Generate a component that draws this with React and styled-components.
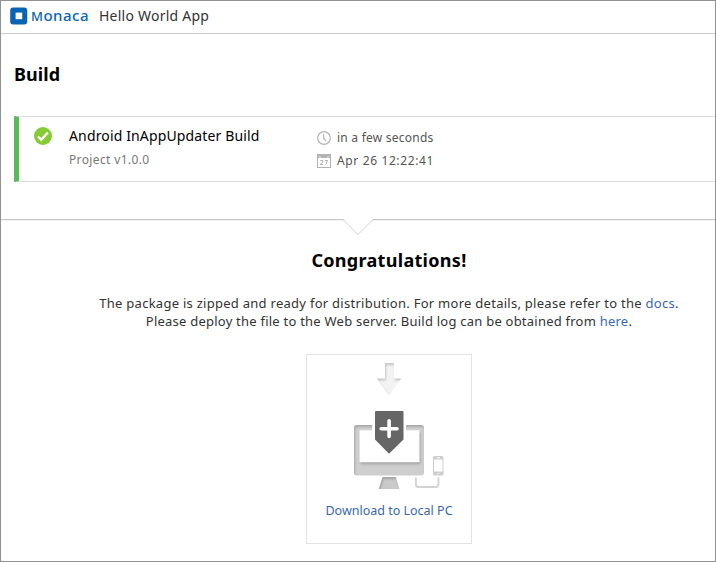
import React from 'react';
import styled, { createGlobalStyle } from 'styled-components';

const GlobalStyle = createGlobalStyle`
  *, *::before, *::after { box-sizing: border-box; }
  body { margin: 0; background: #fff; font-family: "Noto Sans", "Open Sans", sans-serif; color: #333; }
`;

const Page = styled.div`
  width: 716px;
  height: 562px;
  border: 1px solid #929292;
  overflow: hidden;
  display: flex;
  flex-direction: column;
`;

const Header = styled.header`
  height: 33px;
  flex: none;
  display: flex;
  align-items: center;
  padding: 0 0 3px 9px;
  border-bottom: 1px solid #ccc;
`;

const Brand = styled.div`
  display: flex;
  align-items: center;
  width: 89px;
  gap: 3px;
  color: #0864b4;
`;

const Wordmark = styled.span`
  display: block;
  font-size: 15px;
  line-height: 20px;
  font-weight: 500;
  letter-spacing: 0.5px;
  &::first-letter { font-size: 13px; }
`;

const AppName = styled.span`
  font-size: 14px;
  line-height: 20px;
  letter-spacing: 0.23px;
`;

const BuildSection = styled.section`
  height: 186px;
  flex: none;
  padding: 27px 0 0 13px;
  border-bottom: 1px solid #c8c8c8;
`;

const SectionTitle = styled.h1`
  margin: 0;
  color: #000;
  font-size: 18px;
  line-height: 26px;
  font-weight: 700;
  letter-spacing: 0.1px;
`;

const BuildCard = styled.div`
  display: flex;
  height: 66px;
  margin-top: 29px;
  border: solid #dcdcdc;
  border-width: 1px 0;
  border-left: 5px solid #5cb85c;
  padding: 9px 0 0 15px;
`;

const StatusIcon = styled.svg`
  flex: none;
  width: 18px;
  height: 18px;
  margin: 1px 17px 0 0;
`;

const BuildInfo = styled.div`
  width: 248px;
`;

const BuildName = styled.div`
  color: #000;
  font-size: 14px;
  line-height: 20px;
  letter-spacing: 0.14px;
`;

const BuildVersion = styled.div`
  margin-top: 5px;
  color: #777;
  font-size: 12px;
  line-height: 18px;
  letter-spacing: 0.36px;
`;

const MetaList = styled.div`
  display: grid;
  grid-auto-rows: 18px;
  row-gap: 5px;
  padding-top: 3px;
`;

const MetaItem = styled.div`
  display: flex;
  align-items: center;
  gap: 6px;
  color: #555;
  font-size: 12px;
  line-height: 18px;
  letter-spacing: ${(p) => p.$tracking};
  & > svg { margin-top: -1px; }
`;

const Result = styled.main`
  flex: 1;
  position: relative;
  padding: 27px 0 0 62px;
  display: flex;
  flex-direction: column;
  align-items: center;
  box-shadow: inset 0 2px 2px -1px #eee;
`;

const Notch = styled.svg`
  position: absolute;
  left: 341px;
  top: -1px;
  width: 32px;
  height: 17px;
`;

const Congrats = styled.h2`
  margin: 0;
  color: #000;
  font-size: 18px;
  line-height: 26px;
  font-weight: 700;
  letter-spacing: 0.3px;
`;

const Message = styled.p`
  margin: 21px 0 0;
  text-align: center;
  white-space: nowrap;
  font-size: 13px;
  line-height: 18px;
  letter-spacing: ${(p) => p.$tracking};
  & + & { margin-top: 0; }
`;

const Link = styled.a`
  color: #3a68b0;
  text-decoration: none;
`;

const DownloadBox = styled.a`
  display: flex;
  flex-direction: column;
  align-items: center;
  width: 166px;
  height: 190px;
  margin-top: 24px;
  border: 1px solid #e2e2e2;
  color: #3a68b0;
  font-size: 12.5px;
  line-height: 18px;
  text-decoration: none;
  white-space: nowrap;
`;

const Illustration = styled.svg`
  width: 164px;
  height: 147px;
  flex: none;
`;

const Logo = () => (
  <svg width="18" height="18" viewBox="0 0 18 18">
    <rect x=".2" y=".4" width="17" height="17" rx="3" fill="#0864b4" />
    <rect x="5.6" y="5.6" width="6.600" height="6.600" fill="#fff" />
  </svg>
);

const ClockIcon = () => (
  <svg width="14" height="14" viewBox="0 0 14 14" fill="none" stroke="#b3b3b3">
    <circle cx="7" cy="7" r="6.3" strokeWidth="1.2" />
    <path d="M6.7 3.2v4.2l2.4 2.5" strokeWidth="1.2" />
  </svg>
);

const CalendarIcon = () => (
  <svg width="14" height="14" viewBox="0 0 14 14">
    <rect x=".5" y=".5" width="13" height="13" fill="#fff" stroke="#b3b3b3" />
    <path d="M0 0h14v4H0z" fill="#b3b3b3" />
    <path d="M3 2.500v1.5M11 2.500v1.5" stroke="#fff" />
    <path d="M3.2 6.5h2.6v1.8l-2.5 1.9v.3H6M7.8 6.5h2.9l-2 4" fill="none" stroke="#aaa" strokeWidth=".9" />
  </svg>
);

const DownloadIllustration = () => (
  <Illustration viewBox="307 355 164 147">
    <defs>
      <filter id="inner" x="-10%" y="-10%" width="120%" height="120%">
        <feOffset in="SourceAlpha" dx="1" dy="1.5" result="off" />
        <feGaussianBlur in="off" stdDeviation="0.8" result="blur" />
        <feComposite in="SourceAlpha" in2="blur" operator="out" result="edge" />
        <feFlood floodColor="#000" floodOpacity=".38" />
        <feComposite in2="edge" operator="in" result="shade" />
        <feMerge>
          <feMergeNode in="SourceGraphic" />
          <feMergeNode in="shade" />
        </feMerge>
      </filter>
    </defs>
    <path d="M386 363h7a1 1 0 0 1 1 1v14.5h7.3L389 395.3 376.8 378.5h8.2V364a1 1 0 0 1 1-1z" fill="#f3f3f3" filter="url(#inner)" />
    <path fillRule="evenodd" d="M357 425h64a3 3 0 0 1 3 3v44.500a3 3 0 0 1-3 3h-64a3 3 0 0 1-3-3V428a3 3 0 0 1 3-3zM359.500 430.300v32h60v-32z" fill="#cecece" filter="url(#inner)" />
    <path d="M372.200 423h33.800v18.500L389 458l-16.800-16.500z" fill="#fff" />
    <path d="M376 411h26.500a1 1 0 0 1 1 1v27.500L389 453.700 375 439.500V412a1 1 0 0 1 1-1z" fill="#666" />
    <path d="M389.100 420.700v15.800M381.200 428.700h15.800" stroke="#fff" strokeWidth="3.600" strokeLinecap="round" />
    <path d="M383.500 477h11.500a1 1 0 0 1 1 .7l3.300 11.300h-20.600l3.700-11.300a1 1 0 0 1 1.100-.7z" fill="#c9c9c9" filter="url(#inner)" />
    <path d="M415.900 477.500v7a2.500 2.500 0 0 0 2.500 2.500h17.500a2.500 2.500 0 0 0 2.500-2.500v-7" fill="none" stroke="#d2d2d2" strokeWidth="1.900" />
    <path fillRule="evenodd" d="M434.500 456h7.500a1.500 1.500 0 0 1 1.500 1.500v16.500a1.500 1.500 0 0 1-1.500 1.500h-7.500a1.500 1.500 0 0 1-1.500-1.500v-16.500a1.500 1.500 0 0 1 1.500-1.500zM434 459.500v12h8.500v-12z" fill="#cdcdcd" />
    <path d="M436.500 457.800h3.500M437.500 473.500h1.700" stroke="#fff" />
  </Illustration>
);

export default function App() {
  return (
    <>
      <GlobalStyle />
      <Page>
        <Header>
          <Brand>
            <Logo />
            <Wordmark>Monaca</Wordmark>
          </Brand>
          <AppName>Hello World App</AppName>
        </Header>
        <BuildSection>
          <SectionTitle>Build</SectionTitle>
          <BuildCard>
            <StatusIcon viewBox="0 0 18 18">
              <circle cx="9" cy="9" r="9" fill="#84cb36" />
              <path d="M4 9.500l3.200 3.300L13.800 5.500" fill="none" stroke="#fff" strokeWidth="2.400" />
            </StatusIcon>
            <BuildInfo>
              <BuildName>Android InAppUpdater Build</BuildName>
              <BuildVersion>Project v1.0.0</BuildVersion>
            </BuildInfo>
            <MetaList>
              <MetaItem $tracking="0.24px">
                <ClockIcon />
                in a few seconds
              </MetaItem>
              <MetaItem $tracking="0.63px">
                <CalendarIcon />
                Apr 26 12:22:41
              </MetaItem>
            </MetaList>
          </BuildCard>
        </BuildSection>
        <Result>
          <Notch viewBox="0 0 32 17">
            <path d="M1 0L16 15.500 31 0z" fill="#fff" />
            <path d="M1 .5L16 15.500 31 .5" fill="none" stroke="#d2d2d2" />
          </Notch>
          <Congrats>Congratulations!</Congrats>
          <Message $tracking="0.27px">
            The package is zipped and ready for distribution. For more details, please refer to the <Link>docs</Link>.
          </Message>
          <Message $tracking="0.23px">
            Please deploy the file to the Web server. Build log can be obtained from <Link>here</Link>.
          </Message>
          <DownloadBox>
            <DownloadIllustration />
            Download to Local PC
          </DownloadBox>
        </Result>
      </Page>
    </>
  );
}
